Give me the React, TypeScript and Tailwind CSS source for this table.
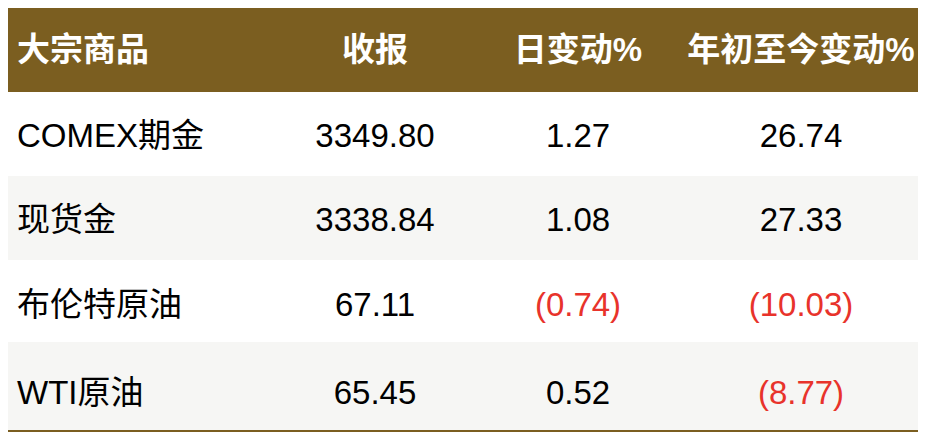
const rows = [
  { name: 'COMEX期金', close: '3349.80', day: '1.27', ytd: '26.74', bg: 'bg-white', h: 'h-[84px]', pt: 'pt-[4px]' },
  { name: '现货金', close: '3338.84', day: '1.08', ytd: '27.33', bg: 'bg-[#f6f6f4]', h: 'h-[84px]', pt: 'pt-[4px]' },
  { name: '布伦特原油', close: '67.11', day: '(0.74)', ytd: '(10.03)', bg: 'bg-white', h: 'h-[82px]', pt: 'pt-[8px]' },
  { name: 'WTI原油', close: '65.45', day: '0.52', ytd: '(8.77)', bg: 'bg-[#f6f6f4]', h: 'h-[88px]', pt: 'pt-[14px]' },
];

const cols = 'grid grid-cols-[270px_194px_212px_234px]';

function Cell({ value, align }: { value: string; align: 'left' | 'center' }) {
  const neg = value.startsWith('(');
  return (
    <div
      className={`flex items-center ${align === 'left' ? 'pl-[9px] justify-start' : 'justify-center'} ${
        neg ? 'text-[#e8332b]' : 'text-black'
      }`}
    >
      {value}
    </div>
  );
}

export default function App() {
  return (
    <div
      className="w-[926px] h-[442px] bg-white pt-[8px] pl-[8px]"
      style={{ fontFamily: '"Liberation Sans", "Noto Sans CJK SC", sans-serif' }}
    >
      <div className="w-[910px]">
        {/* Header */}
        <div className={`${cols} h-[84px] bg-[#7b5e20] text-white font-bold text-[33px]`}>
          <div className="flex items-center pl-[9px]">大宗商品</div>
          <div className="flex items-center justify-center">收报</div>
          <div className="flex items-center justify-center">日变动%</div>
          <div className="flex items-center justify-center whitespace-nowrap">年初至今变动%</div>
        </div>

        {/* Rows */}
        {rows.map((r) => (
          <div key={r.name} className={`${cols} ${r.h} ${r.bg} ${r.pt} text-[33px]`}>
            <Cell value={r.name} align="left" />
            <Cell value={r.close} align="center" />
            <Cell value={r.day} align="center" />
            <Cell value={r.ytd} align="center" />
          </div>
        ))}

        <div className="h-[2px] bg-[#7b5e20]" />
      </div>
    </div>
  );
}
